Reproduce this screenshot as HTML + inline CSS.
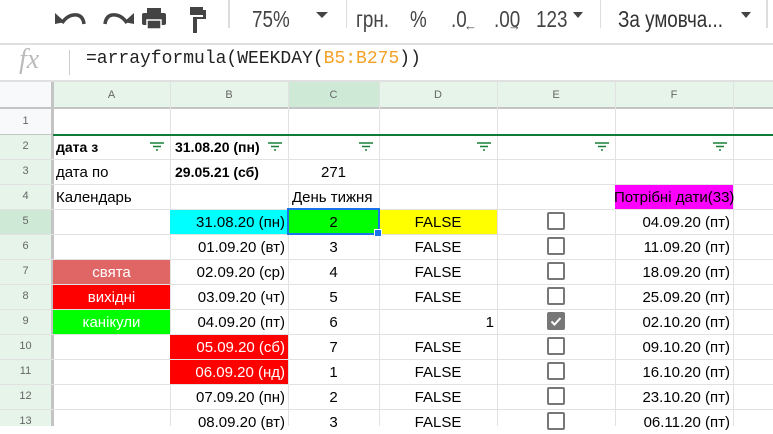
<!DOCTYPE html>
<html><head><meta charset="utf-8"><style>
*{margin:0;padding:0;box-sizing:border-box}
body{width:773px;height:426px;overflow:hidden;background:#fff;font-family:"Liberation Sans",Arial,sans-serif;position:relative;color:#000}
.a{position:absolute}
.tb{font-size:23px;color:#444;top:6px;transform:scaleX(0.82);transform-origin:0 0}
.c{position:absolute;height:25px;line-height:27px;font-size:15px;white-space:nowrap;overflow:hidden;padding:0 3px}
.r{text-align:right}.m{text-align:center}
.h{position:absolute;font-size:11px;color:#666;text-align:center;font-family:"Liberation Sans",sans-serif}
.vl{position:absolute;top:82px;width:1px;height:344px;background:#e2e2e2}
.hl{position:absolute;left:0;height:1px;width:773px;background:#e2e2e2}
.cb{position:absolute;width:18px;height:18px;border:2px solid #777;border-radius:2px}
</style></head><body>
<!-- toolbar -->
<svg class="a" style="left:52px;top:4px" width="180" height="32" viewBox="0 0 180 32">
<path d="M10 19 Q16 10 25 11 Q31 12 32 20" fill="none" stroke="#444" stroke-width="3.5"/><path d="M3 9 L13 18 L3 20 Z" fill="#444"/>
<path d="M75 19 Q69 10 60 11 Q54 12 53 20" fill="none" stroke="#444" stroke-width="3.5"/><path d="M82 9 L72 18 L82 20 Z" fill="#444"/>
<rect x="95" y="4" width="14" height="6" fill="#444"/><rect x="90" y="9" width="24" height="12" rx="2" fill="#444"/><rect x="95" y="16" width="14" height="9" fill="#444" stroke="#fff" stroke-width="1.5"/>
<rect x="138" y="3" width="13" height="8" fill="#444"/><rect x="151" y="6" width="3" height="8" fill="#444"/><rect x="141" y="13" width="13" height="2" fill="#444"/><rect x="141" y="13" width="4" height="16" fill="#444"/>
</svg>
<div class="a" style="left:228px;top:0px;width:2px;height:28px;background:#ddd"></div>
<div class="a tb" style="left:252px">75%</div>
<div class="a" style="left:316px;top:12px;border:6px solid transparent;border-top:6px solid #444"></div>
<div class="a" style="left:346px;top:0px;width:1px;height:28px;background:#ddd"></div>
<div class="a tb" style="left:356px">грн.</div>
<div class="a tb" style="left:410px">%</div>
<div class="a tb" style="left:451px">.0</div>
<div class="a" style="left:464px;top:18px;font-size:13px;color:#444;font-weight:bold">←</div>
<div class="a tb" style="left:494px">.00</div>
<div class="a" style="left:508px;top:18px;font-size:13px;color:#444;font-weight:bold">→</div>
<div class="a tb" style="left:536px">123</div>
<div class="a" style="left:573px;top:12px;border:5px solid transparent;border-top:6px solid #444"></div>
<div class="a" style="left:600px;top:0px;width:1px;height:28px;background:#ddd"></div>
<div class="a tb" style="left:618px;color:#333">За умовча...</div>
<div class="a" style="left:741px;top:12px;border:5px solid transparent;border-top:6px solid #444"></div>
<div class="a" style="left:766px;top:0;width:2px;height:28px;background:#ddd"></div>
<div class="a" style="left:0;top:43px;width:773px;height:2px;background:#e0e0e0"></div>
<!-- formula bar -->
<div class="a" style="left:19px;top:44px;font-family:'Liberation Serif',serif;font-style:italic;font-size:28px;color:#bbb">fx</div>
<div class="a" style="left:69px;top:50px;width:1px;height:25px;background:#ccc"></div>
<div class="a" style="left:86px;top:49px;font-family:'Liberation Mono',monospace;font-size:18px;color:#222">=arrayformula(WEEKDAY(<span style="color:#f4a125">B5:B275</span>))</div>
<div class="a" style="left:0;top:80px;width:773px;height:2px;background:#e0e0e0"></div>
<!-- headers -->
<div class="a" style="left:0;top:82px;width:53px;height:27px;background:#f8f9fa"></div>
<div class="a" style="left:53px;top:82px;width:720px;height:27px;background:#e6f4ea"></div>
<div class="a" style="left:288px;top:82px;width:91px;height:27px;background:#cee9d6"></div>
<div class="a" style="left:0;top:109px;width:53px;height:317px;background:#e6f4ea"></div>
<div class="a" style="left:0;top:109px;width:53px;height:25px;background:#f8f9fa"></div>
<div class="a" style="left:0;top:209px;width:53px;height:25px;background:#cee9d6"></div>
<div class="a" style="left:51px;top:82px;width:3px;height:344px;background:#c4c4c4"></div>
<div class="a" style="left:0;top:107px;width:773px;height:2px;background:#c4c4c4"></div>
<div class="vl" style="left:170px"></div><div class="vl" style="left:288px"></div><div class="vl" style="left:379px"></div><div class="vl" style="left:497px"></div><div class="vl" style="left:615px"></div><div class="vl" style="left:733px"></div>
<div class="h" style="left:53px;top:89px;width:117px">A</div>
<div class="h" style="left:170px;top:89px;width:118px">B</div>
<div class="h" style="left:288px;top:89px;width:91px">C</div>
<div class="h" style="left:379px;top:89px;width:118px">D</div>
<div class="h" style="left:497px;top:89px;width:118px">E</div>
<div class="h" style="left:615px;top:89px;width:118px">F</div>
<!-- cell fills -->
<div class="a" style="left:170px;top:209px;width:118px;height:25px;background:#00ffff"></div>
<div class="a" style="left:288px;top:209px;width:91px;height:25px;background:#00ff00"></div>
<div class="a" style="left:379px;top:209px;width:118px;height:25px;background:#ffff00"></div>
<div class="a" style="left:615px;top:184px;width:118px;height:25px;background:#ff00ff"></div>
<div class="a" style="left:53px;top:259px;width:117px;height:25px;background:#e06666"></div>
<div class="a" style="left:53px;top:284px;width:117px;height:25px;background:#ff0000"></div>
<div class="a" style="left:53px;top:309px;width:117px;height:25px;background:#00ff00"></div>
<div class="a" style="left:170px;top:334px;width:118px;height:50px;background:#ff0000"></div>
<!-- row lines -->
<div class="hl" style="top:134px;left:53px;background:#0f7b38;height:2px"></div>
<div class="hl" style="top:159px"></div><div class="hl" style="top:184px"></div><div class="hl" style="top:209px"></div><div class="hl" style="top:234px"></div><div class="hl" style="top:259px"></div><div class="hl" style="top:284px"></div><div class="hl" style="top:309px"></div><div class="hl" style="top:334px"></div><div class="hl" style="top:359px"></div><div class="hl" style="top:384px"></div><div class="hl" style="top:409px"></div>
<div class="a" style="left:0;top:134px;width:51px;height:1px;background:#c4c4c4"></div>
<!-- row numbers -->
<div class="h" style="left:0;top:115px;width:51px">1</div>
<div class="h" style="left:0;top:140px;width:51px">2</div>
<div class="h" style="left:0;top:165px;width:51px">3</div>
<div class="h" style="left:0;top:190px;width:51px">4</div>
<div class="h" style="left:0;top:215px;width:51px">5</div>
<div class="h" style="left:0;top:240px;width:51px">6</div>
<div class="h" style="left:0;top:265px;width:51px">7</div>
<div class="h" style="left:0;top:290px;width:51px">8</div>
<div class="h" style="left:0;top:315px;width:51px">9</div>
<div class="h" style="left:0;top:340px;width:51px">10</div>
<div class="h" style="left:0;top:365px;width:51px">11</div>
<div class="h" style="left:0;top:390px;width:51px">12</div>
<div class="h" style="left:0;top:415px;width:51px">13</div>
<!-- selection -->
<div class="a" style="left:287px;top:208px;width:93px;height:27px;border:2px solid #1a73e8"></div>
<div class="a" style="left:374px;top:229px;width:8px;height:8px;background:#1a73e8;border:1px solid #fff"></div>
<!-- filter icons -->
<svg class="a" style="left:0;top:142px" width="773" height="10"><g stroke="#188038" stroke-width="1.5">
<path d="M150 1h14M153 4.5h8M156 8h2"/><path d="M268 1h14M271 4.5h8M274 8h2"/><path d="M359 1h14M362 4.5h8M365 8h2"/><path d="M477 1h14M480 4.5h8M483 8h2"/><path d="M595 1h14M598 4.5h8M601 8h2"/><path d="M713 1h14M716 4.5h8M719 8h2"/></g></svg>
<!-- cells -->
<div class="c" style="left:53px;top:134px;font-weight:bold;font-size:14px">дата з</div>
<div class="c" style="left:172px;top:134px;font-weight:bold;width:96px;font-size:14px">31.08.20 (пн)</div>
<div class="c" style="left:53px;top:159px">дата по</div>
<div class="c" style="left:172px;top:159px;font-weight:bold;font-size:14px">29.05.21 (сб)</div>
<div class="c m" style="left:288px;top:159px;width:91px">271</div>
<div class="c" style="left:53px;top:184px">Календарь</div>
<div class="c" style="left:288px;top:184px;width:100px;padding:0 4px">День тижня</div>
<div class="c" style="left:612px;top:184px;width:125px;padding:0 0 0 2px">Потрібні дати(33)</div>
<div class="c m" style="left:53px;top:259px;width:117px;color:#fff">свята</div>
<div class="c m" style="left:53px;top:284px;width:117px;color:#fff">вихідні</div>
<div class="c m" style="left:53px;top:309px;width:117px;color:#fff">канікули</div>
<div class="c r" style="left:170px;top:209px;width:118px">31.08.20 (пн)</div>
<div class="c r" style="left:170px;top:234px;width:118px">01.09.20 (вт)</div>
<div class="c r" style="left:170px;top:259px;width:118px">02.09.20 (ср)</div>
<div class="c r" style="left:170px;top:284px;width:118px">03.09.20 (чт)</div>
<div class="c r" style="left:170px;top:309px;width:118px">04.09.20 (пт)</div>
<div class="c r" style="left:170px;top:334px;width:118px;color:#fff">05.09.20 (сб)</div>
<div class="c r" style="left:170px;top:359px;width:118px;color:#fff">06.09.20 (нд)</div>
<div class="c r" style="left:170px;top:384px;width:118px">07.09.20 (пн)</div>
<div class="c r" style="left:170px;top:409px;width:118px">08.09.20 (вт)</div>
<div class="c m" style="left:288px;top:209px;width:91px">2</div>
<div class="c m" style="left:288px;top:234px;width:91px">3</div>
<div class="c m" style="left:288px;top:259px;width:91px">4</div>
<div class="c m" style="left:288px;top:284px;width:91px">5</div>
<div class="c m" style="left:288px;top:309px;width:91px">6</div>
<div class="c m" style="left:288px;top:334px;width:91px">7</div>
<div class="c m" style="left:288px;top:359px;width:91px">1</div>
<div class="c m" style="left:288px;top:384px;width:91px">2</div>
<div class="c m" style="left:288px;top:409px;width:91px">3</div>
<div class="c m" style="left:379px;top:209px;width:118px">FALSE</div>
<div class="c m" style="left:379px;top:234px;width:118px">FALSE</div>
<div class="c m" style="left:379px;top:259px;width:118px">FALSE</div>
<div class="c m" style="left:379px;top:284px;width:118px">FALSE</div>
<div class="c r" style="left:379px;top:309px;width:118px">1</div>
<div class="c m" style="left:379px;top:334px;width:118px">FALSE</div>
<div class="c m" style="left:379px;top:359px;width:118px">FALSE</div>
<div class="c m" style="left:379px;top:384px;width:118px">FALSE</div>
<div class="c m" style="left:379px;top:409px;width:118px">FALSE</div>
<div class="cb" style="left:547px;top:212px"></div>
<div class="cb" style="left:547px;top:237px"></div>
<div class="cb" style="left:547px;top:262px"></div>
<div class="cb" style="left:547px;top:287px"></div>
<div class="cb" style="left:547px;top:312px;background:#777"><svg width="14" height="14" style="position:absolute;left:0;top:0"><path d="M2.5 7.5l3 3 6-6.5" fill="none" stroke="#fff" stroke-width="2"/></svg></div>
<div class="cb" style="left:547px;top:337px"></div>
<div class="cb" style="left:547px;top:362px"></div>
<div class="cb" style="left:547px;top:387px"></div>
<div class="cb" style="left:547px;top:412px"></div>
<div class="c r" style="left:615px;top:209px;width:118px">04.09.20 (пт)</div>
<div class="c r" style="left:615px;top:234px;width:118px">11.09.20 (пт)</div>
<div class="c r" style="left:615px;top:259px;width:118px">18.09.20 (пт)</div>
<div class="c r" style="left:615px;top:284px;width:118px">25.09.20 (пт)</div>
<div class="c r" style="left:615px;top:309px;width:118px">02.10.20 (пт)</div>
<div class="c r" style="left:615px;top:334px;width:118px">09.10.20 (пт)</div>
<div class="c r" style="left:615px;top:359px;width:118px">16.10.20 (пт)</div>
<div class="c r" style="left:615px;top:384px;width:118px">23.10.20 (пт)</div>
<div class="c r" style="left:615px;top:409px;width:118px">06.11.20 (пт)</div>
</body></html>
